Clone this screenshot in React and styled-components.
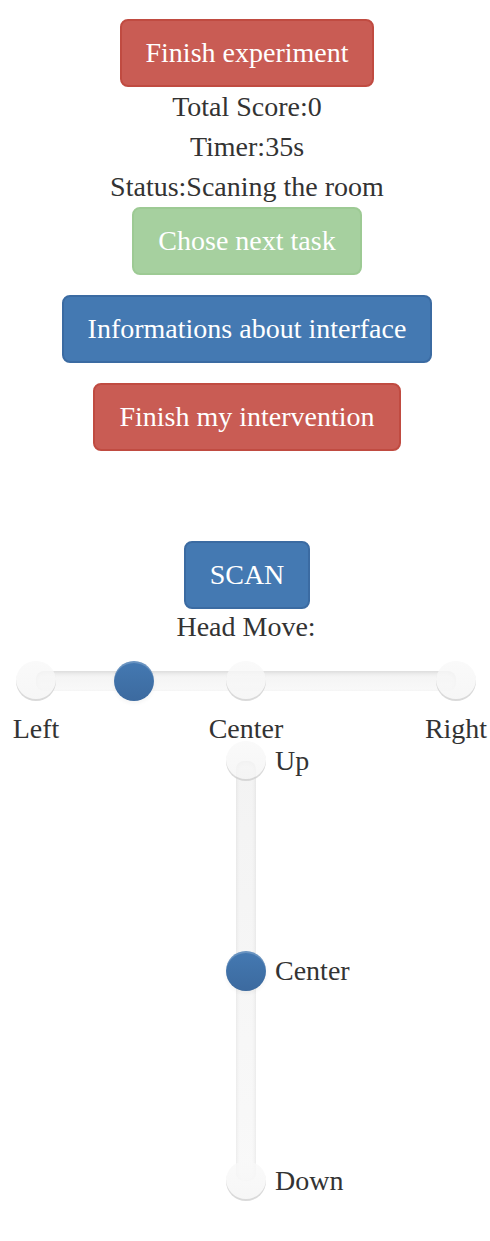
import React, { useState } from "react";
import styled, { createGlobalStyle, css } from "styled-components";

const GlobalStyle = createGlobalStyle`
  *, *::before, *::after {
    box-sizing: border-box;
  }
  body {
    margin: 0;
    background: #fff;
    color: #333;
    font-family: "Liberation Serif", "Times New Roman", serif;
    font-size: 28px;
    line-height: 40px;
  }
`;

const tones = {
  primary: { fill: "#4479b2", edge: "#3b6ba2" },
  danger: { fill: "#c95c54", edge: "#c04b41" },
  success: { fill: "#a6d09f", edge: "#9dca94" },
};

const Page = styled.main`
  display: flex;
  flex-direction: column;
  align-items: center;
  padding: 19px 0 40px 4px;
`;

const Button = styled.button`
  padding: 12px 24px;
  border: 2px solid ${({ $tone }) => tones[$tone].edge};
  border-radius: 8px;
  background: ${({ $tone }) => tones[$tone].fill};
  color: #fff;
  font: inherit;
  white-space: nowrap;
  cursor: pointer;

  &:disabled {
    cursor: not-allowed;
  }
`;

const StatusLine = styled.p`
  margin: 0;
  text-align: center;
`;

const Actions = styled.div`
  display: flex;
  flex-direction: column;
  align-items: center;
  gap: 20px;
  margin-bottom: 90px;
`;

const HeadControls = styled.section`
  align-self: stretch;
  padding: 0 14px 0 12px;
`;

const Heading = styled.h2`
  margin: 0 0 16px;
  font: inherit;
  line-height: 36px;
  text-align: center;
`;

const SliderBox = styled.div`
  position: relative;
  display: flex;
  ${({ $vertical }) => ($vertical ? "width: 40px; height: 460px;" : "height: 40px;")}
`;

const Track = styled.div`
  flex: 1;
  margin: ${({ $vertical }) => ($vertical ? "20px 10px" : "10px 20px")};
  border-radius: 8px;
  background: linear-gradient(#f3f3f3, #f9f9f9);
  box-shadow: inset 0 2px 4px rgba(0, 0, 0, 0.1);
`;

const Ticks = styled.div`
  position: absolute;
  inset: 0;
  display: flex;
  flex-direction: ${({ $vertical }) => ($vertical ? "column" : "row")};
  justify-content: space-between;
`;

const Tick = styled.span`
  width: 40px;
  height: 40px;
  border-radius: 50%;
  background: linear-gradient(#f9f9f9, #f5f5f5);
  box-shadow: inset 0 -2px 0 rgba(0, 0, 0, 0.15);
  opacity: 0.8;
`;

const thumb = css`
  width: 40px;
  height: 40px;
  border: 0;
  border-radius: 50%;
  background: linear-gradient(#4479b2, #3c6a9f);
  box-shadow: inset 0 2px 0 rgba(255, 255, 255, 0.2), 0 2px 4px rgba(0, 0, 0, 0.05);
  cursor: pointer;
`;

const Range = styled.input`
  position: absolute;
  inset: 0;
  width: 100%;
  height: 100%;
  margin: 0;
  appearance: none;
  background: transparent;
  ${({ $vertical }) => $vertical && "writing-mode: vertical-lr;"}

  &::-webkit-slider-thumb {
    appearance: none;
    ${thumb}
  }
  &::-moz-range-thumb {
    ${thumb}
  }
`;

const HorizontalLabels = styled.div`
  display: flex;
  justify-content: space-between;
  margin: 16px 20px 0;
  line-height: 24px;
`;

const PointLabel = styled.span`
  display: flex;
  justify-content: center;
  width: 0;
  white-space: nowrap;
`;

const VerticalLayout = styled.div`
  display: grid;
  grid-template-columns: 1fr 40px 1fr;
  column-gap: 9px;
`;

const VerticalLabels = styled.div`
  grid-column: 3;
  display: flex;
  flex-direction: column;
  justify-content: space-between;
`;

const VerticalSlot = styled.div`
  grid-column: 2;
`;

function Slider({ vertical = false, label, max, value, onChange }) {
  return (
    <SliderBox $vertical={vertical}>
      <Track $vertical={vertical} />
      <Ticks $vertical={vertical}>
        <Tick />
        <Tick />
        <Tick />
      </Ticks>
      <Range
        type="range"
        $vertical={vertical}
        aria-label={label}
        min={0}
        max={max}
        value={value}
        onChange={(event) => onChange(Number(event.target.value))}
      />
    </SliderBox>
  );
}

export default function App() {
  const [pan, setPan] = useState(42);
  const [tilt, setTilt] = useState(90);

  return (
    <>
      <GlobalStyle />
      <Page>
        <Button type="button" $tone="danger">Finish experiment</Button>
        <StatusLine>Total Score:0</StatusLine>
        <StatusLine>Timer:35s</StatusLine>
        <StatusLine>Status:Scaning the room</StatusLine>
        <Actions>
          <Button type="button" $tone="success" disabled>Chose next task</Button>
          <Button type="button" $tone="primary">Informations about interface</Button>
          <Button type="button" $tone="danger">Finish my intervention</Button>
        </Actions>
        <Button type="button" $tone="primary">SCAN</Button>
        <HeadControls>
          <Heading>Head Move:</Heading>
          <Slider label="Head left to right" max={180} value={pan} onChange={setPan} />
          <HorizontalLabels>
            <PointLabel>Left</PointLabel>
            <PointLabel>Center</PointLabel>
            <PointLabel>Right</PointLabel>
          </HorizontalLabels>
          <VerticalLayout>
            <VerticalSlot>
              <Slider vertical label="Head up to down" max={180} value={tilt} onChange={setTilt} />
            </VerticalSlot>
            <VerticalLabels>
              <span>Up</span>
              <span>Center</span>
              <span>Down</span>
            </VerticalLabels>
          </VerticalLayout>
        </HeadControls>
      </Page>
    </>
  );
}
